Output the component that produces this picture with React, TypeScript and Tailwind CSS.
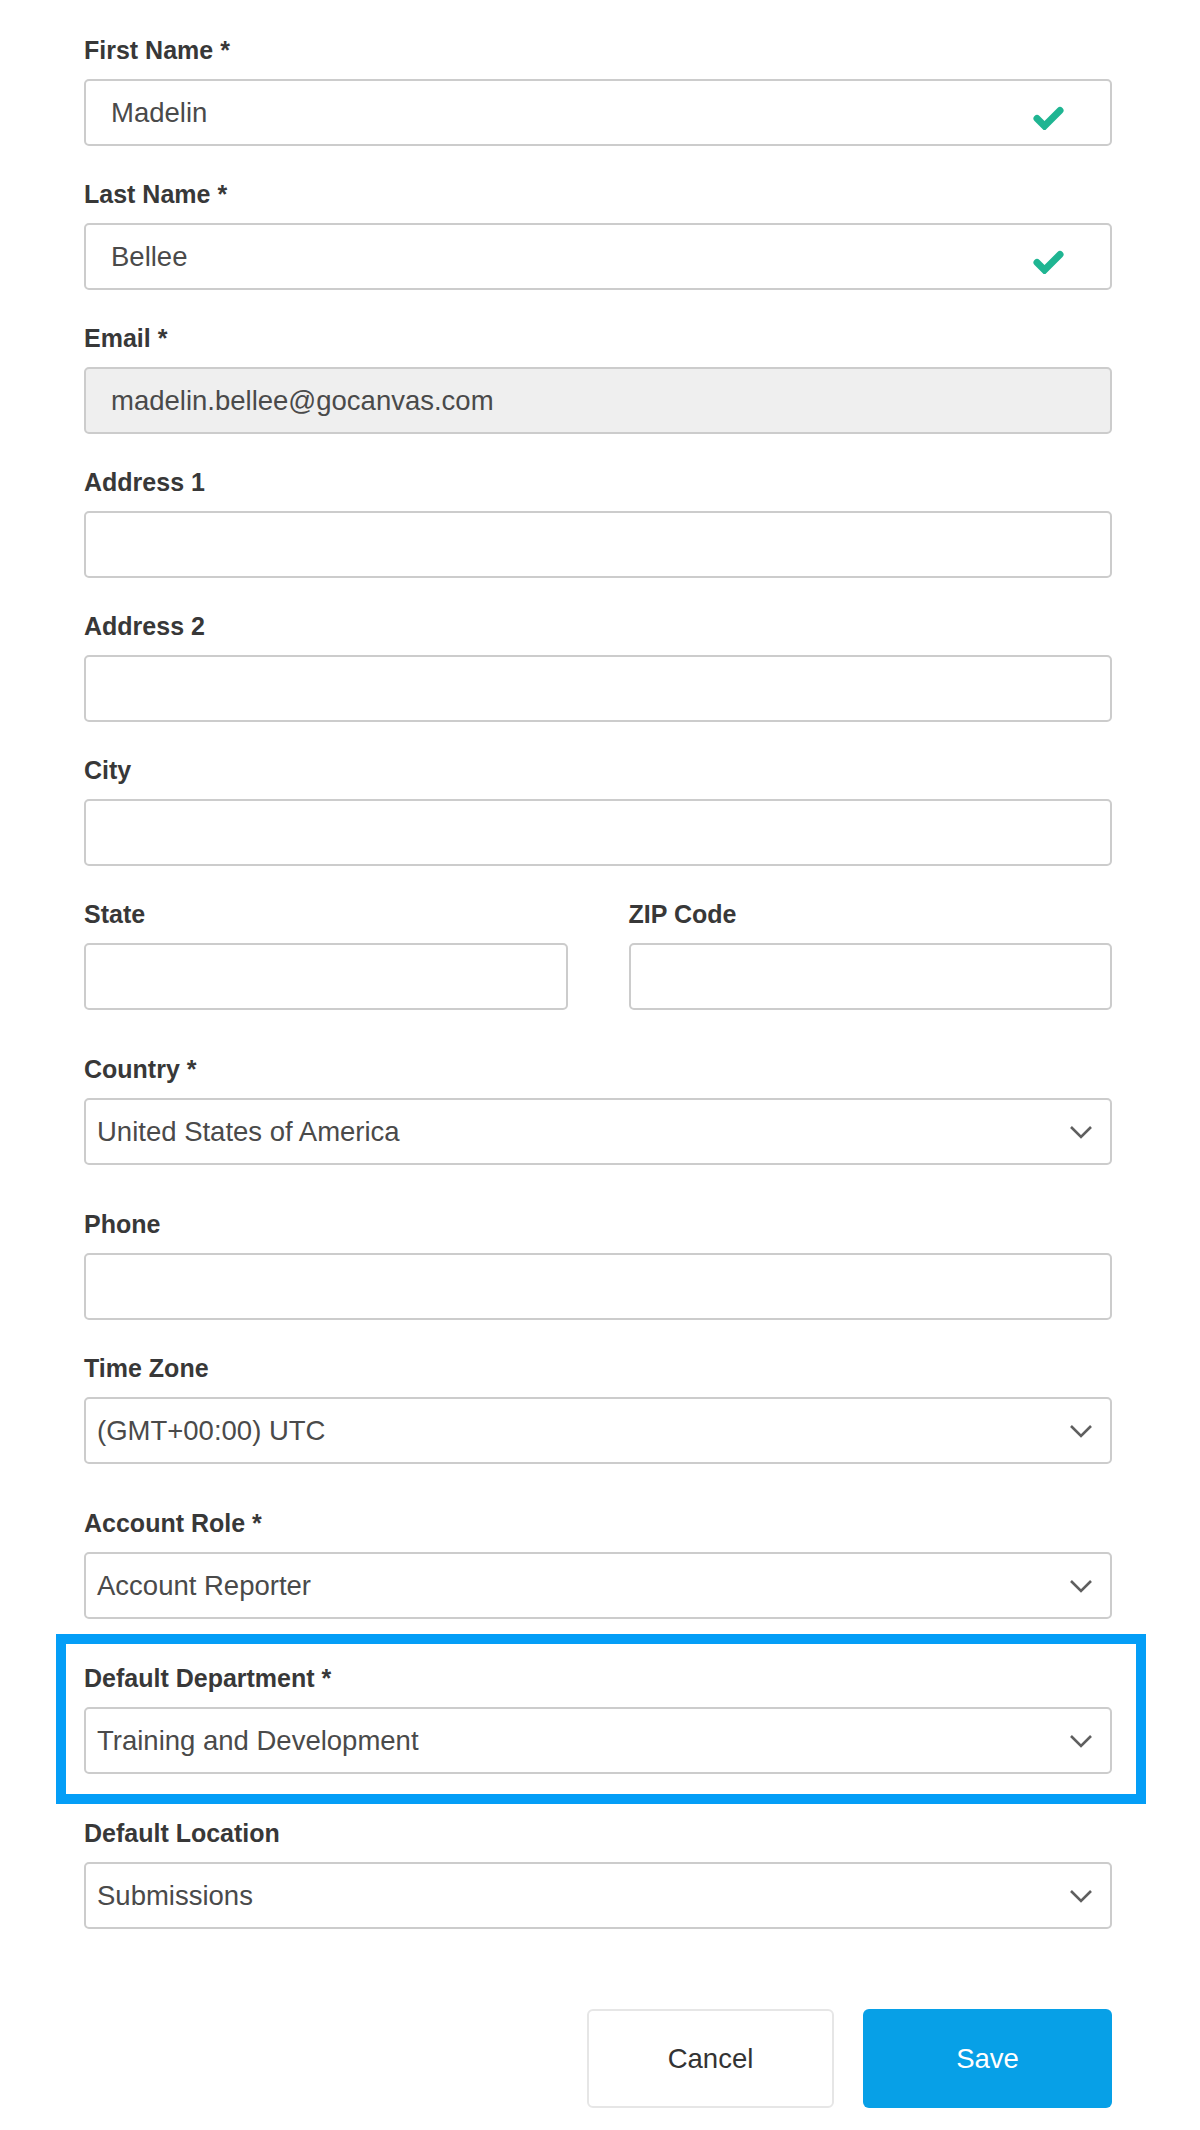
import { useState } from "react";

type FieldProps = {
  label: string;
  required?: boolean;
  spaced?: boolean;
  children: React.ReactNode;
};

const labelClass = "mb-[14px] block text-[25px] font-bold leading-[30px] text-[#383838]";

const Field = ({ label, required, spaced, children }: FieldProps) => (
  <div className={spaced ? "mb-[44px]" : "mb-[33px]"}>
    <label className={labelClass}>
      {label}
      {required ? " *" : null}
    </label>
    {children}
  </div>
);

const CheckIcon = () => (
  <svg width="32" height="26" viewBox="0 0 32 26" className="shrink-0">
    <path
      d="M5 14.5 L12.5 22 L28 6.5"
      fill="none"
      stroke="#1fb592"
      strokeWidth="7"
      strokeLinecap="round"
      strokeLinejoin="miter"
    />
  </svg>
);

const Chevron = () => (
  <svg width="24" height="14" viewBox="0 0 24 14" className="shrink-0">
    <polyline points="2,2 12,12 22,2" fill="none" stroke="#5f5f5f" strokeWidth="2.6" />
  </svg>
);

const TextInput = ({
  value,
  valid,
  disabled,
}: {
  value?: string;
  valid?: boolean;
  disabled?: boolean;
}) => (
  <div
    className={`flex h-[67px] w-full items-center rounded-[5px] border-2 border-[#cccccc] pl-[25px] pr-[46px] ${
      disabled ? "bg-[#efefef]" : "bg-white"
    }`}
  >
    <input
      className="min-w-0 flex-1 bg-transparent text-[27.5px] text-[#4a4a4a] outline-none"
      defaultValue={value}
      disabled={disabled}
    />
    {valid ? (
      <span className="mt-[8px]">
        <CheckIcon />
      </span>
    ) : null}
  </div>
);

const SelectBox = ({ value }: { value: string }) => (
  <button
    type="button"
    className="flex h-[67px] w-full items-center justify-between rounded-[5px] border-2 border-[#cccccc] bg-white pl-[11px] pr-[17px] text-left text-[27.5px] text-[#4a4a4a]"
  >
    <span>{value}</span>
    <Chevron />
  </button>
);

const App = () => {
  const [saved, setSaved] = useState(false);

  return (
    <div className="min-h-screen bg-white font-['Liberation_Sans',Arial,sans-serif]">
      <form
        className="pl-[84px] pr-[88px] pt-[35px] pb-[22px]"
        onSubmit={(event) => {
          event.preventDefault();
          setSaved(true);
        }}
      >
        <Field label="First Name" required>
          <TextInput value="Madelin" valid />
        </Field>
        <Field label="Last Name" required>
          <TextInput value="Bellee" valid />
        </Field>
        <Field label="Email" required>
          <TextInput value="madelin.bellee@gocanvas.com" disabled />
        </Field>
        <Field label="Address 1">
          <TextInput />
        </Field>
        <Field label="Address 2">
          <TextInput />
        </Field>
        <Field label="City">
          <TextInput />
        </Field>

        <div className="mb-[44px] grid grid-cols-2 gap-x-[61px]">
          <div>
            <label className={labelClass}>State</label>
            <TextInput />
          </div>
          <div>
            <label className={labelClass}>ZIP Code</label>
            <TextInput />
          </div>
        </div>

        <Field label="Country" required spaced>
          <SelectBox value="United States of America" />
        </Field>
        <Field label="Phone">
          <TextInput />
        </Field>
        <Field label="Time Zone" spaced>
          <SelectBox value="(GMT+00:00) UTC" />
        </Field>
        <Field label="Account Role" required spaced>
          <SelectBox value="Account Reporter" />
        </Field>

        <div className="relative mb-[44px]">
          <div className="pointer-events-none absolute -top-[29px] -bottom-[30px] -left-[28px] -right-[34px] border-[10px] border-[#049ef7]" />
          <label className={labelClass}>Default Department *</label>
          <SelectBox value="Training and Development" />
        </div>

        <Field label="Default Location">
          <SelectBox value="Submissions" />
        </Field>

        <div className="mt-[80px] flex justify-end gap-[29px]">
          <button
            type="button"
            className="h-[99px] w-[247px] rounded-[6px] border-2 border-[#e6e6e6] bg-white text-[27.5px] text-[#333333]"
          >
            Cancel
          </button>
          <button
            type="submit"
            className="h-[99px] w-[249px] rounded-[6px] bg-[#07a0e7] text-[27.5px] text-white"
          >
            {saved ? "Save" : "Save"}
          </button>
        </div>
      </form>
    </div>
  );
};

export default App;
